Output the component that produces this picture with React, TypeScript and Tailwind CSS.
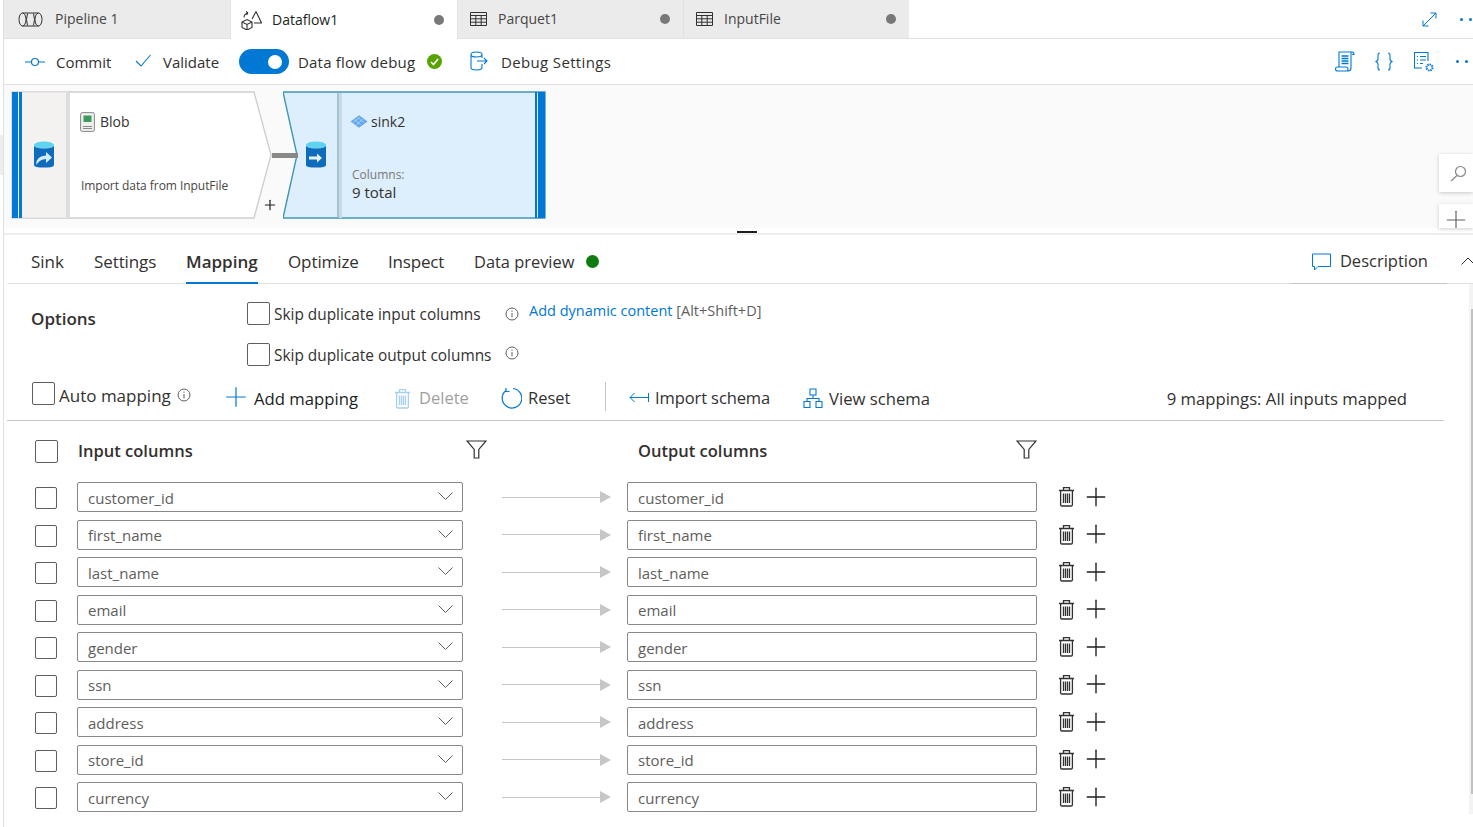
import type { ReactNode } from "react";
import { Plus } from "lucide-react";

const columns = ["customer_id", "first_name", "last_name", "email", "gender", "ssn", "address", "store_id", "currency"];

function Trash({ color = "#323130" }: { color?: string }) {
  return (
    <svg width="17" height="21" viewBox="0 0 17 21" fill="none" stroke={color} strokeWidth="1.3">
      <path d="M1 4.500h15M5.500 4.500V1.600h6v2.900M2.600 4.500v14.200q0 1.300 1.300 1.300h9.200q1.300 0 1.300-1.300V4.500" />
      <path d="M5.500 7.500v9.500M7.500 7.500v9.500M9.500 7.500v9.500M11.500 7.500v9.500" />
    </svg>
  );
}

function Filter() {
  return (
    <svg width="21" height="19" viewBox="0 0 21 19" fill="none" stroke="#323130" strokeWidth="1.2">
      <path d="M1 1h19l-7.200 8.400V18H8.200V9.400z" />
    </svg>
  );
}

function Info({ className = "" }: { className?: string }) {
  return (
    <svg className={className} width="14" height="14" viewBox="0 0 14 14" fill="none" stroke="#605e5c" strokeWidth="1">
      <circle cx="7" cy="7" r="6" />
      <path d="M7 6v4.400M7 3.600v1.200" />
    </svg>
  );
}

function Box({ className = "" }: { className?: string }) {
  return <div className={`shrink-0 rounded-[2px] border border-[#605e5c] bg-white ${className}`} />;
}

function Dots() {
  return (
    <div className="flex gap-[6px]">
      <span className="size-[3px] rounded-full bg-[#0078d4]" />
      <span className="size-[3px] rounded-full bg-[#0078d4]" />
    </div>
  );
}

function FileTab({ icon, label, active, dot = true, width, iconBox }: { icon: ReactNode; label: string; active?: boolean; dot?: boolean; width: string; iconBox: string }) {
  return (
    <div className={`flex h-[39px] items-center ${width} ${active ? "bg-white text-[#201f1e]" : "border-b border-[#e1e1e1] bg-[#ebebeb] text-[#484644]"}`}>
      <div className={`flex shrink-0 justify-center ${iconBox}`}>{icon}</div>
      <span className="flex-1 pb-[1px] text-[14px]">{label}</span>
      {dot && <span className="mr-[13px] size-[10px] rounded-full bg-[#787878]" />}
    </div>
  );
}

function GridIcon() {
  return (
    <svg width="17" height="14" viewBox="0 0 17 14" fill="none" stroke="#323130">
      <path d="M.5.500h16v13H.5zM.5 3.500h16M.5 6.800h16M.5 10.200h16M5.800 3.500v10M11.200 3.500v10" />
    </svg>
  );
}

function MappingRow({ name }: { name: string }) {
  return (
    <div className="flex h-[30px] items-center">
      <Box className="ml-[31px] mt-[2px] size-[22px]" />
      <div className="ml-[20px] flex h-[30px] w-[386px] items-center justify-between rounded-[2px] border border-[#8a8886] pl-[10px] pr-[9px] text-[15px] text-[#605e5c]">
        <span className="mt-[2px]">{name}</span>
        <svg className="-mt-[2px]" width="15" height="8" viewBox="0 0 15 8" fill="none" stroke="#605e5c" strokeWidth="1">
          <path d="M.5.500l7 7 7-7" />
        </svg>
      </div>
      <div className="ml-[39px] flex w-[109px] items-center">
        <div className="h-px flex-1 bg-[#c8c6c4]" />
        <div className="h-0 w-0 border-y-[6px] border-l-[11px] border-y-transparent border-l-[#c8c6c4]" />
      </div>
      <div className="ml-[16px] flex h-[30px] w-[410px] items-center rounded-[2px] border border-[#8a8886] pl-[10px] text-[15px] text-[#605e5c]">
        <span className="mt-[2px]">{name}</span>
      </div>
      <div className="ml-[21px] -mt-[1px]">
        <Trash />
      </div>
      <Plus size={30} strokeWidth={1.1} className="ml-[6px] -mt-[1px] text-[#201f1e]" />
    </div>
  );
}

function Canvas() {
  return (
    <div className="relative h-[143px] shrink-0 bg-[#fafafa]">
      <svg className="absolute left-[7px] top-[6px]" width="270" height="130" viewBox="0 0 270 130">
        <path d="M1 1h242l17 63-17 63H1z" fill="#fff" stroke="#d2d0ce" strokeWidth="1.4" />
        <rect x="10" y="1.500" width="46" height="125" fill="#f3f2f1" />
        <rect x="55" y="1.500" width="4" height="125" fill="#dedede" />
        <rect x="1" y="1" width="6" height="126" fill="#0078d4" />
        <rect x="8" y="1" width="3" height="126" fill="#0078d4" />
      </svg>
      <svg className="absolute left-[279px] top-[6px]" width="264" height="130" viewBox="0 0 264 130">
        <path d="M0 1h262v126H0l14-63z" fill="#ddeefd" stroke="#3f97b8" strokeWidth="1.4" />
        <path d="M55 1v126" stroke="#7aa9bd" strokeWidth="1.2" />
        <rect x="56" y="2" width="3" height="125" fill="#cbd9e4" />
        <rect x="252" y="1" width="2" height="126" fill="#0078d4" />
        <rect x="255" y="1" width="7" height="126" fill="#0078d4" />
      </svg>
      <div className="absolute left-[268px] top-[68px] h-[5px] w-[26px] bg-[#8a8886]" />
      <svg className="absolute left-[29px] top-[56px]" width="22" height="27" viewBox="0 0 22 27">
        <ellipse cx="11" cy="4" rx="10" ry="3.500" fill="#5fd4ee" />
        <path d="M1 4v20q0 2.600 10 2.600T21 24V4q0 3.400-10 3.400T1 4z" fill="#0f6cbd" />
        <path d="M3 24q0-9 10-9.500V11l6 5.500-6 5.500v-4q-6 0-10 6z" fill="#d5ebfa" />
      </svg>
      <svg className="absolute left-[301px] top-[56px]" width="22" height="27" viewBox="0 0 22 27">
        <ellipse cx="11" cy="4" rx="10" ry="3.500" fill="#5fd4ee" />
        <path d="M1 4v20q0 2.600 10 2.600T21 24V4q0 3.400-10 3.400T1 4z" fill="#0f6cbd" />
        <path d="M4 15.500h8v-3l5 4.500-5 4.500v-3H4z" fill="#e6f3fc" />
      </svg>
      <svg className="absolute left-[76px] top-[27px]" width="15" height="20" viewBox="0 0 15 20">
        <rect x=".6" y=".6" width="13.800" height="18.800" rx="1.600" fill="#eef0ee" stroke="#8a8886" />
        <rect x="3.500" y="3.500" width="8" height="6.500" fill="#3d9a5c" />
        <path d="M3 14.500h9M3 16.500h9" stroke="#8a8886" />
      </svg>
      <span className="absolute left-[96px] top-[26px] text-[14px] text-[#323130]">Blob</span>
      <span className="absolute left-[77px] top-[92px] text-[12px] tracking-[-0.05px] text-[#484644]">Import data from InputFile</span>
      <Plus size={16} strokeWidth={1.800} className="absolute left-[258px] top-[112px] text-[#201f1e]" />
      <svg className="absolute left-[346px] top-[29px]" width="18" height="15" viewBox="0 0 17 14">
        <path d="M8.500 1l8 6-8 6-8-6z" fill="#63a8ea" />
        <path d="M4 5l6 5M7 3l6 5M12 5l-6 5M9 3L3 8" stroke="#bcdcf6" strokeWidth=".7" />
      </svg>
      <span className="absolute left-[367px] top-[26px] text-[14px] text-[#323130]">sink2</span>
      <span className="absolute left-[348px] top-[81px] text-[12px] text-[#7a7876]">Columns:</span>
      <span className="absolute left-[348px] top-[96px] text-[15px] text-[#323130]">9 total</span>
      <div className="absolute right-0 top-[69px] flex h-[38px] w-[34px] items-center justify-center bg-white pl-[4px] shadow-[0_1px_4px_rgba(0,0,0,0.2)]">
        <svg width="17" height="17" viewBox="0 0 17 17" fill="none" stroke="#8a8886" strokeWidth="1.2">
          <circle cx="10.500" cy="6.500" r="5" />
          <path d="M7 10.500L1 16" />
        </svg>
      </div>
      <div className="absolute right-0 top-[119px] flex h-[24px] w-[34px] items-start justify-center overflow-hidden bg-white pt-[1px] shadow-[0_1px_4px_rgba(0,0,0,0.2)]">
        <Plus size={30} strokeWidth={0.9} className="text-[#605e5c]" />
      </div>
    </div>
  );
}

export default function App() {
  return (
    <div className="relative h-[827px] w-[1473px] overflow-hidden bg-white font-['Open_Sans','Noto_Sans',sans-serif] text-[#323130]">
      <div className="ml-[3px] flex h-full flex-col border-l border-[#e1e1e1]">
        {/* document tabs */}
        <div className="flex h-[39px] shrink-0 border-b border-[#e1e1e1]">
          <FileTab
            width="w-[226px]"
            iconBox="w-[51px] pl-[1px]"
            dot={false}
            label="Pipeline 1"
            icon={
              <svg width="25" height="15" viewBox="0 0 25 15" fill="none" stroke="#323130" strokeWidth="1">
                <ellipse cx="4.500" cy="7.500" rx="3.500" ry="6.500" />
                <ellipse cx="20.500" cy="7.500" rx="3.500" ry="6.500" />
                <path d="M9.500 1.500q-2 6 0 12M15.500 1.500q2 6 0 12M4.500 1h16M4.500 14h16" />
              </svg>
            }
          />
          <div className="w-px bg-[#e1e1e1]" />
          <FileTab
            width="w-[226px]"
            iconBox="w-[41px]"
            active
            label="Dataflow1"
            icon={
              <svg width="21" height="20" viewBox="0 0 21 20" fill="none" stroke="#323130" strokeWidth="1.1">
                <path d="M1 12l5-2.500 5 2.500v5.500L6 20l-5-2.500zM1 12l5 2.500 5-2.500M6 14.500V20" />
                <path d="M15 1.500L20.500 13H13M15 1.500L11 9" />
                <path d="M3 7.500Q3 4 7 3M7 3L5 1.500M7 3L5.500 5" />
              </svg>
            }
          />
          <div className="w-px bg-[#e1e1e1]" />
          <FileTab width="w-[225px]" iconBox="w-[40px]" label="Parquet1" icon={<GridIcon />} />
          <div className="w-px bg-[#e1e1e1]" />
          <FileTab width="w-[225px]" iconBox="w-[40px]" label="InputFile" icon={<GridIcon />} />
          <div className="flex flex-1 items-center justify-end gap-[23px] pr-[1px]">
            <svg width="15" height="15" viewBox="0 0 15 15" fill="none" stroke="#0078d4" strokeWidth="1">
              <path d="M1 14L14 1M8.500 1H14v5.500M1 8.500V14h5.500" />
            </svg>
            <Dots />
          </div>
        </div>

        {/* toolbar */}
        <div className="flex h-[46px] shrink-0 items-center border-b border-[#e1e1e1] text-[15px] text-[#323130]">
          <svg className="ml-[21px]" width="20" height="10" viewBox="0 0 20 10" fill="none" stroke="#0078d4" strokeWidth="1.2">
            <circle cx="10" cy="5" r="3.500" />
            <path d="M0 5h6.500M13.500 5H20" />
          </svg>
          <span className="ml-[11px] mt-[2px] w-[56px]">Commit</span>
          <svg className="ml-[23px] -mt-[2px]" width="16" height="13" viewBox="0 0 16 13" fill="none" stroke="#0078d4" strokeWidth="1.1">
            <path d="M1 7l5 5L15.500 1" />
          </svg>
          <span className="ml-[12px] mt-[2px] w-[56px]">Validate</span>
          <div className="ml-[20px] flex h-[25px] w-[50px] items-center justify-end rounded-full bg-[#0078d4] pr-[7px]">
            <span className="size-[14px] rounded-full bg-white" />
          </div>
          <span className="ml-[9px] mt-[2px] w-[129px] whitespace-nowrap tracking-[0.2px]">Data flow debug</span>
          <span className="flex size-[15px] items-center justify-center rounded-full bg-[#57a300]">
            <svg width="9" height="8" viewBox="0 0 9 8" fill="none" stroke="#fff" strokeWidth="1.6">
              <path d="M1 4l2.500 2.500L8 1" />
            </svg>
          </span>
          <svg className="ml-[28px] -mt-[2px]" width="18" height="20" viewBox="0 0 18 20" fill="none" stroke="#0078d4" strokeWidth="1.1">
            <path d="M1 3.500v13q0 2.500 5.500 2.500T12 16.500V13M12 7V3.500M1 3.500q0-2.500 5.500-2.500T12 3.500 6.500 6 1 3.500zM7 10h10M14 7l3 3-3 3" />
          </svg>
          <span className="ml-[13px] mt-[2px] whitespace-nowrap tracking-[0.35px]">Debug Settings</span>
          <div className="ml-auto flex items-center pr-[5px]">
            <svg width="20" height="21" viewBox="0 0 20 21" fill="none" stroke="#0078d4" strokeWidth="1.100">
              <path d="M4 16V1h14M17 1q2 0 2 2.500h-2M16.500 1q-.5 0-.5 2v14q0 3-3 3H2.500q-2 0-2-2t2-2H11q2 0 2 2t-1 2" />
              <path d="M6.500 5h7M6.500 7.500h7M6.500 10h7M6.500 12.500h7" strokeWidth="1.300" />
            </svg>
            <span className="ml-[20px] text-[#0078d4]">
              <svg width="18" height="19" viewBox="0 0 18 19" fill="none" stroke="#0078d4" strokeWidth="1.100">
                <path d="M5 1q-2 0-2 2v4q0 2-2.500 2.500Q3 10 3 12v4q0 2 2 2M13 1q2 0 2 2v4q0 2 2.500 2.500Q15 10 15 12v4q0 2-2 2" />
              </svg>
            </span>
            <svg className="ml-[21px]" width="20" height="20" viewBox="0 0 20 20" fill="none" stroke="#0078d4" strokeWidth="1.100">
              <path d="M8 16H.5V.5h13.500V9M3 4.500h1M6 4.500h6M3 8h1M6 8h6M3 11.500h1M6 11.500h3" />
              <circle cx="15.500" cy="15.500" r="3" strokeWidth="2" strokeDasharray="1.500 .8" />
            </svg>
            <div className="ml-[22px]">
              <Dots />
            </div>
          </div>
        </div>

        <Canvas />

        {/* splitter */}
        <div className="relative h-[7px] shrink-0 border-b-2 border-[#ededed]">
          <div className="absolute left-[733px] top-[3px] h-[2px] w-[20px] bg-[#201f1e]" />
        </div>

        {/* panel tabs */}
        <div className="ml-[3px] flex h-[49px] shrink-0 items-end border-b border-[#e1e1e1] pl-[24px] text-[17px]">
          <div className="flex h-[44px] items-center gap-[30px]">
            <span className="mt-[2px] w-[33px]">Sink</span>
            <span className="mt-[2px] w-[62px] tracking-[-0.1px]">Settings</span>
            <span className="relative flex h-full w-[72px] items-center pt-[2px] font-semibold">
              Mapping
              <span className="absolute inset-x-0 -bottom-[1px] h-[2px] bg-[#0078d4]" />
            </span>
            <span className="mt-[2px] w-[70px] tracking-[-0.1px]">Optimize</span>
            <span className="mt-[2px] w-[56px] tracking-[-0.2px]">Inspect</span>
            <span className="flex items-center">
              <span className="mt-[2px] w-[100px] whitespace-nowrap text-[16.400px]">Data preview</span>
              <span className="ml-[12px] mt-[2px] size-[13px] rounded-full bg-[#107c10]" />
            </span>
          </div>
          <div className="ml-auto -mb-px flex h-[44px] items-center border-b border-[#c8c6c4] pl-[22px] pr-[19px]">
            <svg width="19" height="18" viewBox="0 0 19 18" fill="none" stroke="#0078d4" strokeWidth="1">
              <path d="M.5 1h18v12.500H6L2.500 17v-3.500h-2z" />
            </svg>
            <span className="ml-[9px] -mt-[1px] whitespace-nowrap text-[16.500px]">Description</span>
          </div>
          <div className="-mr-[2px] flex h-[44px] w-[28px] items-center justify-end">
            <svg width="14" height="8" viewBox="0 0 14 8" fill="none" stroke="#323130" strokeWidth="1">
              <path d="M.5 7.500l6.500-6.500 6.500 6.500" />
            </svg>
          </div>
        </div>

        {/* options */}
        <div className="flex shrink-0 pl-[27px] pt-[18px]">
          <span className="mt-[5px] w-[216px] text-[17px] font-semibold leading-[24px]">Options</span>
          <div className="flex flex-col gap-[18px] text-[15.400px]">
            <div className="flex h-[23px] items-center">
              <Box className="size-[23px]" />
              <span className="ml-[4px] mt-[2px] w-[231px] whitespace-nowrap">Skip duplicate input columns</span>
              <Info />
              <span className="ml-[10px] -mt-[6px] whitespace-nowrap text-[14.500px]">
                <span className="text-[#0078d4]">Add dynamic content</span>
                <span className="text-[#605e5c]"> [Alt+Shift+D]</span>
              </span>
            </div>
            <div className="flex h-[23px] items-center">
              <Box className="size-[23px]" />
              <span className="ml-[4px] mt-[2px] w-[231px] whitespace-nowrap">Skip duplicate output columns</span>
              <Info className="-mt-[3px]" />
            </div>
          </div>
        </div>

        {/* mapping toolbar */}
        <div className="ml-[3px] mt-[16px] flex h-[39px] w-[1437px] shrink-0 items-start border-b border-[#c8c6c4] text-[16.500px]">
          <Box className="ml-[25px] size-[23px]" />
          <span className="ml-[4px] mt-[1px] w-[118px] whitespace-nowrap text-[17px]">Auto mapping</span>
          <Info className="mt-[6px]" />
          <Plus size={32} strokeWidth={0.9} className="ml-[29px] -mt-[1px] text-[#0078d4]" />
          <span className="ml-[2px] mt-[4px] w-[105px] whitespace-nowrap text-[16.700px] text-[#201f1e]">Add mapping</span>
          <div className="ml-[35px] mt-[6px]">
            <Trash color="#a6d0ee" />
          </div>
          <span className="ml-[8px] mt-[4px] w-[50px] text-[#a19f9d]">Delete</span>
          <svg className="ml-[31px] mt-[5px]" width="22" height="22" viewBox="0 0 22 22" fill="none" stroke="#0078d4" strokeWidth="1.200">
            <path d="M6 3.500A9.800 9.800 0 1 0 13 1.500M6 1v3.500h3.500" />
          </svg>
          <span className="ml-[6px] mt-[4px] w-[42px]">Reset</span>
          <div className="ml-[35px] h-[29px] w-px bg-[#c8c6c4]" />
          <svg className="ml-[23px] mt-[10px]" width="20" height="12" viewBox="0 0 20 12" fill="none" stroke="#0078d4" strokeWidth="1">
            <path d="M19.500 1v9M19 5.500H1M5.500 1L1 5.500 5.500 10" />
          </svg>
          <span className="ml-[6px] mt-[4px] w-[115px] whitespace-nowrap tracking-[-0.1px]">Import schema</span>
          <svg className="ml-[33px] mt-[6px]" width="20" height="20" viewBox="0 0 20 20" fill="none" stroke="#0078d4" strokeWidth="1.100">
            <path d="M7 1h6v6H7zM1 13.500h6v6H1zM13 13.500h6v6h-6zM10 7v3.500M4 13.500v-3h12v3" />
          </svg>
          <span className="ml-[6px] mt-[4px] whitespace-nowrap text-[16.700px]">View schema</span>
          <span className="ml-auto mr-[37px] mt-[4px] whitespace-nowrap text-[16.700px]">9 mappings: All inputs mapped</span>
        </div>

        {/* mapping table */}
        <div className="flex h-[61px] shrink-0 items-start pl-[31px] pt-[19px]">
          <Box className="size-[23px]" />
          <span className="ml-[20px] -mt-[1px] w-[388px] text-[16.500px] font-semibold leading-[23px]">Input columns</span>
          <Filter />
          <span className="ml-[151px] -mt-[1px] w-[378px] text-[16.500px] font-semibold leading-[23px]">Output columns</span>
          <Filter />
        </div>
        <div className="flex flex-col gap-[7.5px]">
          {columns.map((name) => (
            <MappingRow key={name} name={name} />
          ))}
        </div>
      </div>

      {/* scrollbar and left canvas sliver */}
      <div className="absolute right-0 top-[284px] h-[530px] w-[4px] bg-[#f3f3f3]">
        <div className="absolute right-0 top-[25px] h-[485px] w-[2px] bg-[#c1c1c1]" />
      </div>
      <div className="absolute left-0 top-[135px] h-[40px] w-[3px] bg-[#eeeeee]" />
    </div>
  );
}
